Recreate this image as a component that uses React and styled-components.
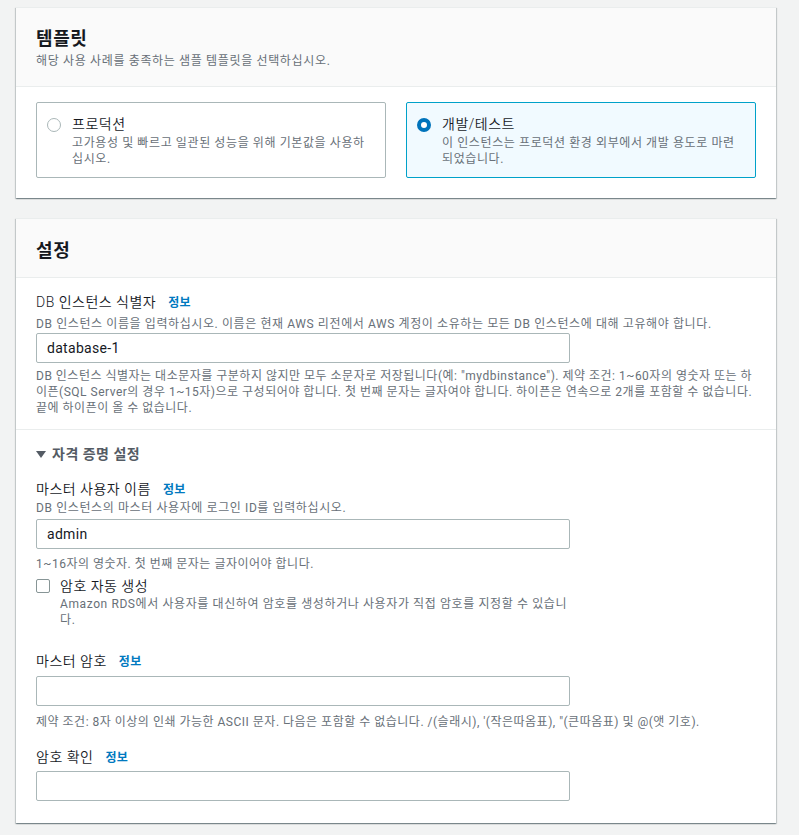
import React from "react";
import styled, { createGlobalStyle } from "styled-components";

const Global = createGlobalStyle`
  html, body { margin: 0; padding: 0; background: #f2f3f3; }
  body {
    font-family: Roboto, "Noto Sans CJK KR", "Noto Sans", sans-serif;
    color: #16191f;
    -webkit-font-smoothing: antialiased;
  }
  * { box-sizing: border-box; }
`;

const Page = styled.div`
  display: flex;
  flex-direction: column;
  gap: 20px;
  padding: 7px 23px 12px 16px;
`;

const Card = styled.section`
  background: #ffffff;
  border-top: 1px solid #eaeded;
  box-shadow: 0 1px 1px 0 rgba(0, 28, 36, 0.3), 1px 1px 1px 0 rgba(0, 28, 36, 0.15),
    -1px 1px 1px 0 rgba(0, 28, 36, 0.15);
`;

const CardHeader = styled.header`
  background: #fafafa;
  border-bottom: 1px solid #eaeded;
  padding: ${(p) => (p.$sub ? "20px 20px 17px" : "21px 20px 15px")};
`;

const CardTitle = styled.h2`
  margin: 0;
  font-size: 18px;
  line-height: 22px;
  font-weight: 700;
  letter-spacing: 0.6px;
  color: #16191f;
`;

const CardSubtitle = styled.p`
  margin: 3px 0 0;
  font-size: 12px;
  line-height: 16px;
  letter-spacing: 0.65px;
  color: #687078;
`;

const TileGrid = styled.div`
  display: grid;
  grid-template-columns: 1fr 1fr;
  gap: 20px;
  padding: 15px 20px 20px;
`;

const Tile = styled.label`
  display: flex;
  gap: 11px;
  padding: 11px 14px 10px 10px;
  min-height: 76px;
  border: 1px solid ${(p) => (p.$checked ? "#00a1c9" : "#aab7b8")};
  background: ${(p) => (p.$checked ? "#f1faff" : "#ffffff")};
  border-radius: 2px;
`;

const Radio = styled.span`
  flex: none;
  width: 14px;
  height: 14px;
  margin-top: 4px;
  border-radius: 50%;
  background: #fff;
  border: ${(p) => (p.$checked ? "4px solid #0073bb" : "1.5px solid #aab7b8")};
`;

const TileText = styled.div`
  display: flex;
  flex-direction: column;
`;

const TileTitle = styled.span`
  font-size: 14px;
  line-height: 20px;
  font-weight: 350;
  letter-spacing: 0.5px;
  color: #16191f;
`;

const TileDesc = styled.span`
  margin-top: 1px;
  font-size: 12px;
  line-height: 16px;
  letter-spacing: 0.6px;
  color: #687078;
`;

const Body = styled.div`
  padding: 14px 20px 13px;
`;

const Section = styled.div`
  padding: 14px 20px 22px;
  border-top: 1px solid #eaeded;
`;

const Field = styled.div`
  display: flex;
  flex-direction: column;
  margin-top: ${(p) => p.$mt || 0}px;
`;

const LabelRow = styled.div`
  display: flex;
  align-items: baseline;
  gap: 12px;
  font-size: 14px;
  line-height: 20px;
  font-weight: 350;
  letter-spacing: 0.5px;
  color: #16191f;
`;

const Info = styled.a`
  font-size: 12px;
  font-weight: 700;
  letter-spacing: 0.3px;
  color: #0079bf;
  text-decoration: none;
`;

const Desc = styled.div`
  margin-top: ${(p) => p.$mt || 0}px;
  font-size: 12px;
  line-height: 16px;
  letter-spacing: 0.6px;
  color: #687078;
`;

const Input = styled.input`
  display: block;
  width: 534px;
  height: 30px;
  margin: ${(p) => p.$mt ?? 4}px 0 0;
  padding: 4px 10px;
  border: 1px solid #aab7b8;
  border-radius: 2px;
  font-family: Roboto, "Noto Sans CJK KR", sans-serif;
  font-size: 14px;
  letter-spacing: 0.3px;
  color: #16191f;
  background: #fff;
  outline: none;
`;

const Hint = styled.div`
  margin-top: ${(p) => p.$mt ?? 3}px;
  font-size: 12px;
  line-height: 16px;
  letter-spacing: 0.5px;
  color: #687078;
`;

const Expander = styled.div`
  display: flex;
  align-items: center;
  gap: 6px;
  font-size: 14px;
  line-height: 20px;
  font-weight: 700;
  letter-spacing: 0.5px;
  color: #545b64;
`;

const Caret = styled.svg`
  width: 10px;
  height: 7px;
  margin-top: 1px;
  fill: #545b64;
`;

const CheckRow = styled.label`
  display: flex;
  gap: 10px;
  margin-top: 4px;
`;

const Box = styled.span`
  flex: none;
  width: 14px;
  height: 14px;
  margin-top: 3px;
  border: 1px solid #879596;
  border-radius: 2px;
  background: #fff;
`;

const CheckText = styled.div`
  display: flex;
  flex-direction: column;
  width: 510px;
`;

const CheckTitle = styled.span`
  font-size: 14px;
  line-height: 20px;
  font-weight: 350;
  letter-spacing: 0.5px;
  color: #16191f;
`;

export default function App() {
  return (
    <>
      <Global />
      <Page>
        <Card>
          <CardHeader $sub>
            <CardTitle>템플릿</CardTitle>
            <CardSubtitle>해당 사용 사례를 충족하는 샘플 템플릿을 선택하십시오.</CardSubtitle>
          </CardHeader>
          <TileGrid>
            <Tile>
              <Radio />
              <TileText>
                <TileTitle>프로덕션</TileTitle>
                <TileDesc>고가용성 및 빠르고 일관된 성능을 위해 기본값을 사용하십시오.</TileDesc>
              </TileText>
            </Tile>
            <Tile $checked>
              <Radio $checked />
              <TileText>
                <TileTitle>개발/테스트</TileTitle>
                <TileDesc>이 인스턴스는 프로덕션 환경 외부에서 개발 용도로 마련되었습니다.</TileDesc>
              </TileText>
            </Tile>
          </TileGrid>
        </Card>

        <Card>
          <CardHeader>
            <CardTitle>설정</CardTitle>
          </CardHeader>
          <Body>
            <Field>
              <LabelRow>
                DB 인스턴스 식별자 <Info href="#">정보</Info>
              </LabelRow>
              <Desc $mt={3}>
                DB 인스턴스 이름을 입력하십시오. 이름은 현재 AWS 리전에서 AWS 계정이 소유하는 모든 DB 인스턴스에 대해 고유해야 합니다.
              </Desc>
              <Input $mt={1} defaultValue="database-1" />
              <Hint $mt={5}>
                DB 인스턴스 식별자는 대소문자를 구분하지 않지만 모두 소문자로 저장됩니다(예: "mydbinstance"). 제약 조건: 1~60자의 영숫자 또는 하이픈(SQL Server의 경우 1~15자)으로 구성되어야 합니다. 첫 번째 문자는 글자여야 합니다. 하이픈은 연속으로 2개를 포함할 수 없습니다. 끝에 하이픈이 올 수 없습니다.
              </Hint>
            </Field>
          </Body>
          <Section>
            <Expander>
              <Caret viewBox="0 0 10 7">
                <path d="M0 0 H10 L5 7 Z" />
              </Caret>
              자격 증명 설정
            </Expander>
            <Field $mt={15}>
              <LabelRow>
                마스터 사용자 이름 <Info href="#">정보</Info>
              </LabelRow>
              <Desc>DB 인스턴스의 마스터 사용자에 로그인 ID를 입력하십시오.</Desc>
              <Input $mt={3} defaultValue="admin" />
              <Hint $mt={7}>1~16자의 영숫자. 첫 번째 문자는 글자이어야 합니다.</Hint>
              <CheckRow>
                <Box />
                <CheckText>
                  <CheckTitle>암호 자동 생성</CheckTitle>
                  <Desc>Amazon RDS에서 사용자를 대신하여 암호를 생성하거나 사용자가 직접 암호를 지정할 수 있습니다.</Desc>
                </CheckText>
              </CheckRow>
            </Field>
            <Field $mt={23}>
              <LabelRow>
                마스터 암호 <Info href="#">정보</Info>
              </LabelRow>
              <Input $mt={4} type="password" />
              <Hint $mt={8}>
                제약 조건: 8자 이상의 인쇄 가능한 ASCII 문자. 다음은 포함할 수 없습니다. /(슬래시), '(작은따옴표), "(큰따옴표) 및 @(앳 기호).
              </Hint>
            </Field>
            <Field $mt={17}>
              <LabelRow>
                암호 확인 <Info href="#">정보</Info>
              </LabelRow>
              <Input $mt={3} type="password" />
            </Field>
          </Section>
        </Card>
      </Page>
    </>
  );
}
